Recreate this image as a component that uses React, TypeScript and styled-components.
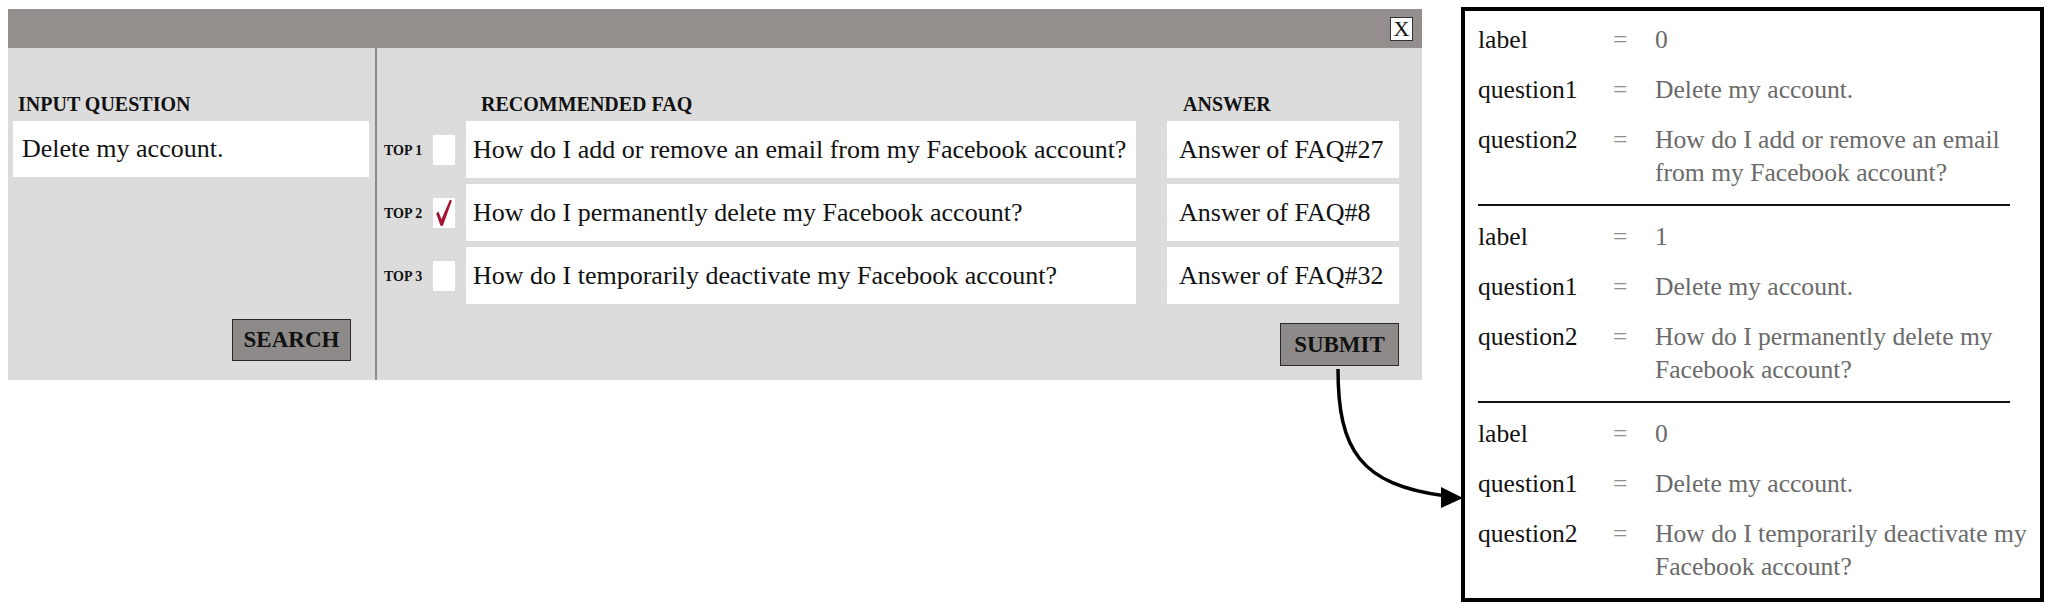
import React from 'react';
import styled, { createGlobalStyle } from 'styled-components';

const GlobalStyle = createGlobalStyle`
    html, body {
        margin: 0;
        padding: 0;
        background: #fff;
    }
    body {
        font-family: 'Liberation Serif', 'Times New Roman', serif;
        color: #111;
    }
`;

const Page = styled.div`
    position: relative;
    width: 2052px;
    height: 608px;
    box-sizing: border-box;
    padding: 7px 0 0 8px;
    display: flex;
    align-items: flex-start;
    gap: 39px;
`;

const Dialog = styled.section`
    width: 1414px;
    margin-top: 2px;
    display: flex;
    flex-direction: column;
`;

const TitleBar = styled.div`
    height: 39px;
    background: #948f8d;
    display: flex;
    align-items: center;
    justify-content: flex-end;
    padding-right: 9px;
`;

const CloseButton = styled.div`
    width: 23px;
    height: 24px;
    box-sizing: border-box;
    background: #fff;
    border: 1px solid #333;
    font-size: 22px;
    line-height: 1;
    color: #111;
    display: flex;
    align-items: center;
    justify-content: center;
    padding-top: 1px;
`;

const Body = styled.div`
    height: 332px;
    background: #dcdcdc;
    display: flex;
`;

const InputColumn = styled.div`
    width: 369px;
    box-sizing: border-box;
    padding: 46px 6px 19px 5px;
    border-right: 2px solid #8c8c8c;
    display: flex;
    flex-direction: column;
`;

const FaqArea = styled.div`
    flex: 1;
    box-sizing: border-box;
    padding: 46px 23px 0 7px;
    display: flex;
    flex-direction: column;
`;

const ColumnHeading = styled.div<{ $indent: number; $width?: number }>`
    font-weight: bold;
    font-size: 20px;
    line-height: 20px;
    height: 20px;
    white-space: nowrap;
    color: #111;
    margin: 0 0 7px ${(p) => p.$indent}px;
    ${(p) => (p.$width ? `width: ${p.$width}px;` : '')}
`;

const HeaderRow = styled.div`
    display: flex;
`;

const InputBox = styled.div`
    height: 56px;
    background: #fff;
    display: flex;
    align-items: center;
    padding-left: 9px;
    font-size: 26px;
    color: #111;
`;

const ActionButton = styled.div<{ $offset: number }>`
    align-self: flex-end;
    margin-right: ${(p) => p.$offset}px;
    width: 119px;
    height: 43px;
    box-sizing: border-box;
    background: #8e8a89;
    border: 1.5px solid #2a2a2a;
    display: flex;
    align-items: center;
    justify-content: center;
    font-weight: bold;
    font-size: 23px;
    color: #111;
`;

const SearchButton = styled(ActionButton)`
    margin-top: auto;
    height: 42px;
`;

const SubmitButton = styled(ActionButton)`
    margin-top: 19px;
`;

const FaqList = styled.div`
    display: flex;
    flex-direction: column;
    gap: 6px;
`;

const FaqRow = styled.div`
    display: flex;
    align-items: center;
    height: 57px;
`;

const RankLabel = styled.div`
    width: 39px;
    margin-right: 10px;
    font-weight: bold;
    font-size: 14px;
    white-space: nowrap;
    color: #111;
    padding-top: 3px;
`;

const CheckBox = styled.div`
    width: 22px;
    height: 30px;
    margin-right: 11px;
    background: #fff;
    display: flex;
    align-items: center;
    justify-content: center;
    svg {
        display: block;
    }
`;

const QuestionCell = styled.div`
    width: 670px;
    height: 57px;
    box-sizing: border-box;
    background: #fff;
    display: flex;
    align-items: center;
    padding-left: 7px;
    font-size: 26px;
    white-space: nowrap;
    color: #111;
`;

const AnswerCell = styled.div`
    width: 232px;
    height: 57px;
    margin-left: 31px;
    box-sizing: border-box;
    background: #fff;
    display: flex;
    align-items: center;
    padding-left: 12px;
    font-size: 26px;
    white-space: nowrap;
    color: #111;
`;

const PairBox = styled.aside`
    width: 583px;
    box-sizing: border-box;
    border: 4px solid #000;
    background: #fff;
    padding: 0 0 0 13px;
`;

const PairSection = styled.div`
    padding: 14px 0 15px;
    &:first-child {
        padding-top: 12px;
    }
`;

const Rule = styled.div`
    width: 532px;
    height: 2px;
    background: #111;
`;

const FieldGrid = styled.div`
    display: grid;
    grid-template-columns: 135px 42px 384px;
    row-gap: 17px;
    font-size: 25.6px;
    line-height: 33px;
`;

const FieldName = styled.div`
    color: #111;
`;

const Equals = styled.div`
    color: #8f8f8f;
`;

const FieldValue = styled.div`
    color: #6a6a6a;
`;

const Connector = styled.svg`
    position: absolute;
    left: 0;
    top: 0;
    pointer-events: none;
`;

const faqs = [
    { rank: 'TOP 1', question: 'How do I add or remove an email from my Facebook account?', answer: 'Answer of FAQ#27', checked: false },
    { rank: 'TOP 2', question: 'How do I permanently delete my Facebook account?', answer: 'Answer of FAQ#8', checked: true },
    { rank: 'TOP 3', question: 'How do I temporarily deactivate my Facebook account?', answer: 'Answer of FAQ#32', checked: false },
];

const inputQuestion = 'Delete my account.';

const CheckMark = () => (
    <svg width="22" height="30" viewBox="0 0 22 30">
        <path d="M3.2 15.4 L5.4 13.6 L8.5 21.2 L16.9 1.8 L18.9 2.5 L9.9 27.8 L7.5 27.8 Z" fill="#a3122e" />
    </svg>
);

export default function App() {
    return (
        <>
            <GlobalStyle />
            <Page>
                <Dialog>
                    <TitleBar>
                        <CloseButton>X</CloseButton>
                    </TitleBar>
                    <Body>
                        <InputColumn>
                            <ColumnHeading $indent={5}>INPUT QUESTION</ColumnHeading>
                            <InputBox>{inputQuestion}</InputBox>
                            <SearchButton $offset={18}>SEARCH</SearchButton>
                        </InputColumn>
                        <FaqArea>
                            <HeaderRow>
                                <ColumnHeading $indent={97} $width={702}>
                                    RECOMMENDED FAQ
                                </ColumnHeading>
                                <ColumnHeading $indent={0}>ANSWER</ColumnHeading>
                            </HeaderRow>
                            <FaqList>
                                {faqs.map((f) => (
                                    <FaqRow key={f.rank}>
                                        <RankLabel>{f.rank}</RankLabel>
                                        <CheckBox>{f.checked && <CheckMark />}</CheckBox>
                                        <QuestionCell>{f.question}</QuestionCell>
                                        <AnswerCell>{f.answer}</AnswerCell>
                                    </FaqRow>
                                ))}
                            </FaqList>
                            <SubmitButton $offset={0}>SUBMIT</SubmitButton>
                        </FaqArea>
                    </Body>
                </Dialog>
                <PairBox>
                    {faqs.map((f, i) => (
                        <React.Fragment key={f.rank}>
                            {i > 0 && <Rule />}
                            <PairSection>
                                <FieldGrid>
                                    <FieldName>label</FieldName>
                                    <Equals>=</Equals>
                                    <FieldValue>{f.checked ? 1 : 0}</FieldValue>
                                    <FieldName>question1</FieldName>
                                    <Equals>=</Equals>
                                    <FieldValue>{inputQuestion}</FieldValue>
                                    <FieldName>question2</FieldName>
                                    <Equals>=</Equals>
                                    <FieldValue>{f.question}</FieldValue>
                                </FieldGrid>
                            </PairSection>
                        </React.Fragment>
                    ))}
                </PairBox>
                <Connector width="2052" height="608" viewBox="0 0 2052 608">
                    <path d="M1338 369 C1338 450, 1360 485, 1446 496" fill="none" stroke="#000" strokeWidth="3.5" />
                    <polygon points="1463,498 1441,487 1441,508" fill="#000" />
                </Connector>
            </Page>
        </>
    );
}
